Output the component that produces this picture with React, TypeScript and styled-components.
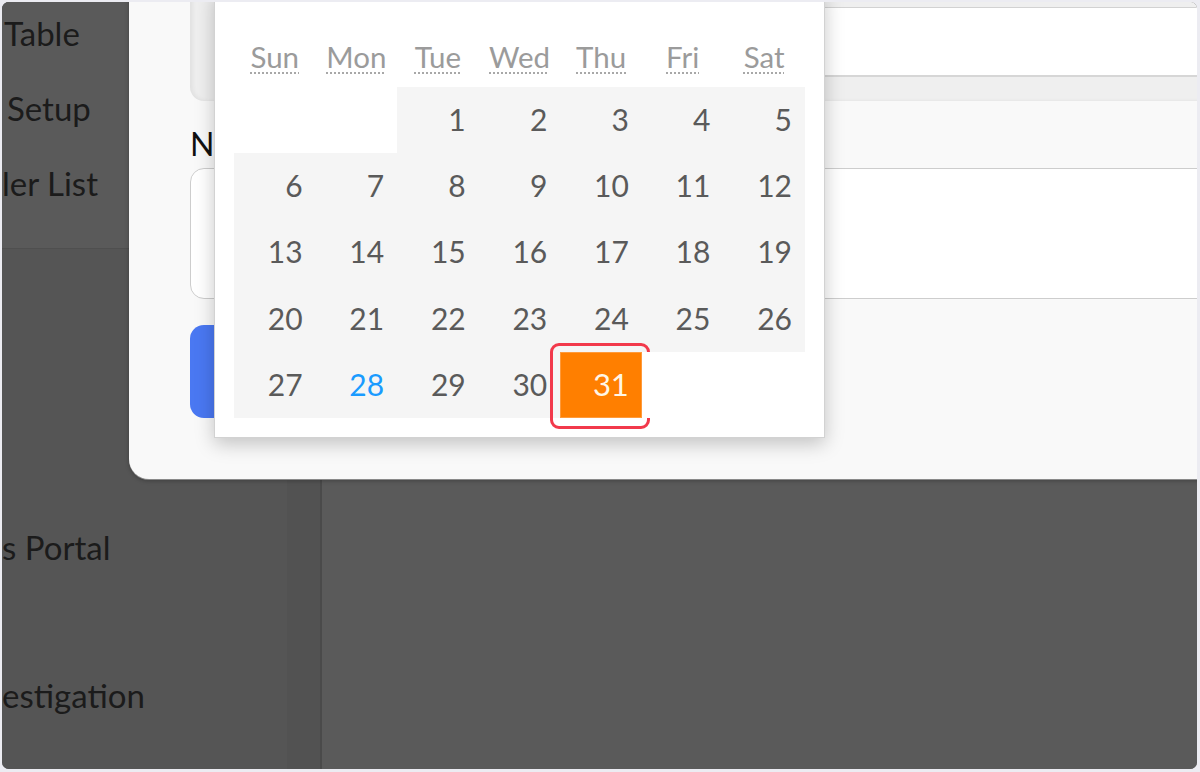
import React from "react";
import styled, { createGlobalStyle } from "styled-components";

const Global = createGlobalStyle`
  html, body { margin: 0; padding: 0; background: #ececf2; }
  body { font-family: Lato, "Noto Sans", sans-serif; }
  * { box-sizing: border-box; }
`;

const Frame = styled.div`
  position: relative;
  width: 1195px;
  height: 767px;
  margin: 2px 0 0 2px;
  border-radius: 7px;
  overflow: hidden;
  display: flex;
  background: #5a5a5a;
`;

const Sidebar = styled.aside`
  width: 285px;
  flex: none;
  display: flex;
  flex-direction: column;
  background: #555555;
  overflow: hidden;
`;

const SideTop = styled.div`
  height: 247px;
  flex: none;
  background: #5a5a5a;
  border-bottom: 1px solid #4f4f4f;
  overflow: hidden;
`;

const SideBottom = styled.div`
  flex: 1;
  padding-top: 261px;
  overflow: hidden;
`;

const NavList = styled.div<{ $shift?: number }>`
  display: flex;
  flex-direction: column;
  margin-top: ${(p) => p.$shift ?? 0}px;
`;

const NavItem = styled.div<{ $indent: number; $h?: number }>`
  height: ${(p) => p.$h ?? 75}px;
  line-height: ${(p) => p.$h ?? 75}px;
  padding-left: ${(p) => p.$indent}px;
  font-size: 33px;
  color: #1b1b1b;
  white-space: nowrap;
`;

const Gutter = styled.div`
  width: 33px;
  flex: none;
  background: #525252;
`;

const Rule = styled.div`
  width: 2px;
  flex: none;
  background: #4a4a4a;
`;

const Main = styled.main`
  flex: 1;
  background: #5a5a5a;
`;

const Modal = styled.section`
  position: absolute;
  left: 127px;
  top: -40px;
  right: -30px;
  height: 517px;
  background: #f9f9f9;
  border-radius: 0 0 0 20px;
  box-shadow: 0 1px 0 #8a8a8a, 0 2px 4px rgba(0, 0, 0, 0.25);
  padding-left: 61px;
  display: flex;
  flex-direction: column;
`;

const GrayBox = styled.div`
  height: 139px;
  flex: none;
  background: #efefef;
  border-radius: 0 0 0 14px;
  box-shadow: inset 3px 0 4px rgba(0, 0, 0, 0.06);
  padding: 45px 0 0 24px;
`;

const InnerInput = styled.div`
  height: 70px;
  background: #ffffff;
  border-top: 1px solid #d2d2d2;
  border-bottom: 2px solid #d6d6d6;
`;

const Label = styled.label`
  margin-top: 25px;
  font-size: 32px;
  line-height: 36px;
  color: #111111;
`;

const TextInput = styled.div`
  margin-top: 6px;
  height: 131px;
  background: #ffffff;
  border: 1px solid #cdcdcd;
  border-radius: 14px;
`;

const PrimaryButton = styled.button`
  margin-top: 26px;
  width: 380px;
  height: 93px;
  border: none;
  border-radius: 14px;
  background: #4a78f2;
  color: #fff;
  font-family: inherit;
  font-size: 28px;
`;

const Popover = styled.div`
  position: absolute;
  left: 212px;
  top: -12px;
  width: 611px;
  height: 448px;
  background: #ffffff;
  border: 1px solid #d2d2d2;
  box-shadow: 0 6px 18px rgba(0, 0, 0, 0.22);
  padding: 0 19px 20px;
  display: flex;
  flex-direction: column;
  z-index: 2;
`;

const HeaderRow = styled.div`
  height: 96px;
  flex: none;
  display: grid;
  grid-template-columns: repeat(7, 1fr);
  align-items: end;
  padding-bottom: 13px;
`;

const DayName = styled.abbr`
  text-align: center;
  font-size: 29.5px;
  line-height: 1.2;
  color: #9b9b9b;
  text-decoration: underline dotted #a8a8a8;
  text-decoration-thickness: 2px;
  text-underline-offset: 5px;
  cursor: help;
`;

const DayGrid = styled.div`
  display: grid;
  grid-template-columns: repeat(7, 1fr);
  grid-auto-rows: 66.2px;
`;

const DayCell = styled.div<{ $empty?: boolean; $today?: boolean; $selected?: boolean }>`
  position: relative;
  display: flex;
  align-items: center;
  justify-content: flex-end;
  padding-right: 13px;
  padding-bottom: 2px;
  font-size: ${(p) => (p.$selected ? 31 : 30)}px;
  color: ${(p) => (p.$selected ? "#fff6e6" : p.$today ? "#1a9bff" : "#5a5a5a")};
  background: ${(p) => (p.$empty ? "#ffffff" : p.$selected ? "#ff7f00" : "#f5f5f5")};
  box-shadow: ${(p) => (p.$selected ? "inset 0 0 0 1px #ff9a3a" : "none")};
`;

const Callout = styled.span`
  position: absolute;
  left: -10px;
  right: -8px;
  top: -9px;
  bottom: -11px;
  border: 3px solid #f2394b;
  border-radius: 9px;
  pointer-events: none;
`;

const dayNames = [
  ["Sun", "Sunday"],
  ["Mon", "Monday"],
  ["Tue", "Tuesday"],
  ["Wed", "Wednesday"],
  ["Thu", "Thursday"],
  ["Fri", "Friday"],
  ["Sat", "Saturday"],
];

const startOffset = 2;
const daysInMonth = 31;
const today = 28;
const selected = 31;

export default function App() {
  const cells: (number | null)[] = [];
  for (let i = 0; i < startOffset; i++) cells.push(null);
  for (let d = 1; d <= daysInMonth; d++) cells.push(d);
  while (cells.length % 7 !== 0) cells.push(null);

  return (
    <>
      <Global />
      <Frame>
        <Sidebar>
          <SideTop>
            <NavList $shift={-6}>
              <NavItem $indent={2}>Table</NavItem>
              <NavItem $indent={5}>Setup</NavItem>
              <NavItem $indent={0}>ler List</NavItem>
            </NavList>
          </SideTop>
          <SideBottom>
            <NavList>
              <NavItem $indent={0} $h={74}>s Portal</NavItem>
              <NavItem $indent={0} $h={74}></NavItem>
              <NavItem $indent={0} $h={74}>estigation</NavItem>
            </NavList>
          </SideBottom>
        </Sidebar>
        <Gutter />
        <Rule />
        <Main />

        <Modal>
          <GrayBox>
            <InnerInput />
          </GrayBox>
          <Label>Notes</Label>
          <TextInput />
          <PrimaryButton>Save</PrimaryButton>
        </Modal>

        <Popover>
          <HeaderRow>
            {dayNames.map(([s, l]) => (
              <DayName key={s} title={l}>
                {s}
              </DayName>
            ))}
          </HeaderRow>
          <DayGrid>
            {cells.map((d, i) =>
              d === null ? (
                <DayCell key={i} $empty />
              ) : (
                <DayCell key={i} $today={d === today} $selected={d === selected}>
                  {d}
                  {d === selected && <Callout />}
                </DayCell>
              )
            )}
          </DayGrid>
        </Popover>
      </Frame>
    </>
  );
}
